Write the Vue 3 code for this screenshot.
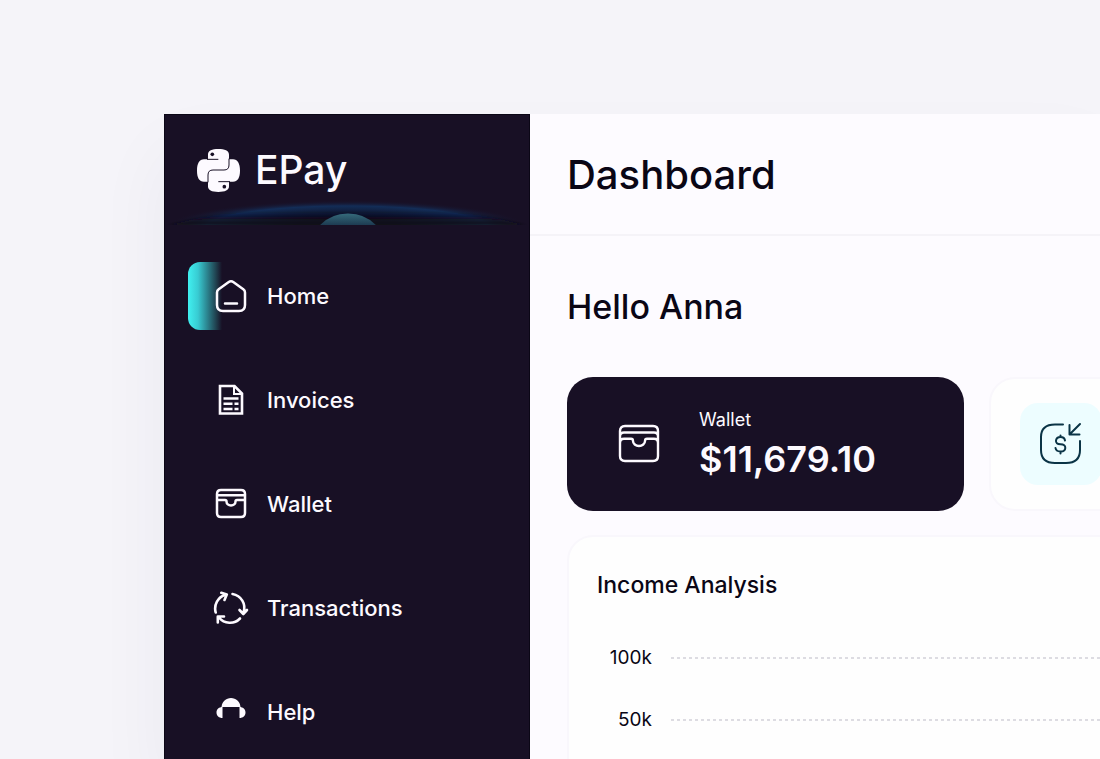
<script setup>
const items = [
  { id: 'home', label: 'Home' },
  { id: 'invoices', label: 'Invoices' },
  { id: 'wallet', label: 'Wallet' },
  { id: 'transactions', label: 'Transactions' },
  { id: 'help', label: 'Help' },
]
const ticks = ['100k', '50k']
</script>

<template>
  <div class="page">
    <div class="window">
      <aside class="sidebar">
        <div class="brand">
          <svg class="glow" viewBox="0 0 366 40" preserveAspectRatio="none" aria-hidden="true">
            <defs>
              <radialGradient id="arc" cx="0" cy="0" r="1" gradientUnits="userSpaceOnUse" gradientTransform="translate(183 42) scale(182 27)">
                <stop offset="0" stop-color="#0e0b19" />
                <stop offset="0.3" stop-color="#0e0f20" />
                <stop offset="0.55" stop-color="#101c39" />
                <stop offset="0.78" stop-color="#132d57" />
                <stop offset="1" stop-color="#181025" stop-opacity="0" />
              </radialGradient>
              <linearGradient id="shade" x1="0" y1="0" x2="0" y2="1">
                <stop offset="0" stop-color="#0e0b19" stop-opacity="0" />
                <stop offset="1" stop-color="#0e0b19" />
              </linearGradient>
              <linearGradient id="orb" x1="0" y1="0" x2="0" y2="1">
                <stop offset="0" stop-color="#356a7a" />
                <stop offset="1" stop-color="#1d3b52" />
              </linearGradient>
              <filter id="soft" x="-10%" y="-50%" width="120%" height="200%">
                <feGaussianBlur stdDeviation="4 1" />
              </filter>
            </defs>
            <ellipse cx="183" cy="42" rx="182" ry="27" fill="url(#arc)" />
            <path d="M6 40Q40 30 80 26H286Q326 30 360 40Z" fill="url(#shade)" filter="url(#soft)" />
            <path d="M156 40Q167 28.500 184 28.500T212 40Z" fill="url(#orb)" />
          </svg>
          <svg class="logo" viewBox="0 0 129 129" aria-hidden="true">
            <path fill="#fdfaff" d="M33 31V17C33 5 45 0 64 0S96 5 96 17V31H108C122 31 129 44 129 65S122 98 108 98H96V112C96 124 84 129 64 129S33 124 33 112V98H21C7 98 0 86 0 65S7 31 21 31Z" />
            <path fill="none" stroke="#181025" stroke-width="3" d="M30 31H64M96 29V48Q96 63 81 63H48Q33 63 33 78V100M64 98H99" />
            <circle cx="46" cy="16" r="5.500" fill="#181025" />
            <circle cx="82" cy="113" r="5.500" fill="#181025" />
          </svg>
          <span class="name">EPay</span>
        </div>
        <nav>
          <a v-for="(item, i) in items" :key="item.id" :href="'#' + item.id" class="item" :class="{ active: i === 0 }">
            <svg class="icon" viewBox="0 0 36 36" fill="none" stroke="#fdfaff" stroke-width="2.500" aria-hidden="true">
              <path v-if="item.id === 'home'" stroke-linecap="round" stroke-linejoin="round" d="M4 14.500Q4 12.500 5.700 11.300L15.400 4.200Q18 2.400 20.600 4.200L30.300 11.300Q32 12.500 32 14.500V27Q32 33 26 33H10Q4 33 4 27ZM12 25.500H24" />
              <g v-else-if="item.id === 'invoices'">
                <path stroke-width="2.600" d="M7 4H21.500L29 11.500V31.500H7Z" />
                <path stroke-width="2" d="M21 4.500V12H28.500" />
                <path stroke-width="2.400" d="M10.500 16.500H25.500M10.500 21.800H19.500M21.500 21.800H25.500M10.500 27H19.500M21.500 27H25.500" />
              </g>
              <path v-else-if="item.id === 'wallet'" stroke-linejoin="round" d="M4 8Q4 4 8 4H28Q32 4 32 8V27Q32 31 28 31H8Q4 31 4 27ZM4 9.200H32M4 14H12Q13.500 14 13.500 15.500A4.500 4 0 0 0 22.500 15.500Q22.500 14 24 14H32" />
              <g v-else-if="item.id === 'transactions'" stroke-width="2.600" stroke-linecap="round" stroke-linejoin="round">
                <path d="M2.700 22.500A14.500 14.500 0 0 1 12.300 4.800M8.300 2.800L13.800 4.500L11.500 10" />
                <path d="M19.500 4A14 14 0 0 1 30.500 22.500M26.500 20L30.300 24L34 20" />
                <path d="M27 28.500A14 14 0 0 1 6 27.500M4.800 32.500V26.500H11" />
              </g>
              <g v-else fill="#fdfaff" stroke="none">
                <path d="M8.500 13C9 7.500 13 4 18 4S27 7.500 27.500 13Z" />
                <path d="M9.500 13V24C6 24 3.500 21.800 3.500 18.500S6 13 9.500 13ZM26.500 13V24C30 24 32.500 21.800 32.500 18.500S30 13 26.500 13Z" />
              </g>
            </svg>
            <span>{{ item.label }}</span>
          </a>
        </nav>
      </aside>

      <main>
        <header><h1>Dashboard</h1></header>
        <div class="content">
          <h2>Hello Anna</h2>
          <div class="cards">
            <section class="card dark">
              <svg class="wallet" viewBox="0 0 42 42" fill="none" stroke="#fdfaff" stroke-width="2.400" stroke-linejoin="round" aria-hidden="true">
                <path d="M2 8Q2 3 7 3H35Q40 3 40 8V33Q40 38 35 38H7Q2 38 2 33ZM2 13.500Q2 9.500 6 9.500H36Q40 9.500 40 13.500M2 20Q2 15.800 6 15.800H13Q15 15.800 15 18A6 5 0 0 0 27 18Q27 15.800 29 15.800H36Q40 15.800 40 20" />
              </svg>
              <div>
                <div class="label">Wallet</div>
                <div class="amount">$11,679.10</div>
              </div>
            </section>
            <section class="card light">
              <div class="tile">
                <svg viewBox="0 0 44 44" fill="none" stroke="#0b3446" stroke-width="2" stroke-linecap="round" stroke-linejoin="round" aria-hidden="true">
                  <path d="M24 2.500H16Q2 2.500 2 15V28Q2 41 16 41H27Q41 41 41 28V19" />
                  <path d="M41 2L31 12M30.500 3V12.500H40.500" />
                  <path d="M26 18.500Q25.500 15 21.500 15T17 18.500T21.500 22.200T26.300 26T21.500 29.500T16.500 26M21.500 13.500V15M21.500 29.500V31.500" />
                </svg>
              </div>
            </section>
          </div>
          <section class="chart">
            <h3>Income Analysis</h3>
            <div v-for="tick in ticks" :key="tick" class="row">
              <span class="tick">{{ tick }}</span>
              <span class="line"></span>
            </div>
          </section>
        </div>
      </main>
    </div>
  </div>
</template>

<style>
body {
  background: #f5f4f9;
}
</style>

<style scoped>
* {
  box-sizing: border-box;
}
.page {
  display: flex;
  height: 100vh;
  padding: 114px 0 0 164px;
  overflow: hidden;
  background: #f5f4f9;
  color: #0a0615;
  font-family: Inter, "Liberation Sans", sans-serif;
}
.window {
  display: flex;
  flex: 1;
  min-width: 0;
  box-shadow: 0 40px 70px rgba(40, 30, 80, 0.05);
}
.sidebar {
  flex: 0 0 366px;
  background: #181025;
  color: #fdfaff;
  border: solid #0b0716;
  border-width: 1px 1px 0;
}
.brand {
  position: relative;
  display: flex;
  align-items: center;
  gap: 15px;
  height: 110px;
  padding: 0 32px;
  overflow: hidden;
}
.glow {
  position: absolute;
  left: 0;
  bottom: 0;
  width: 100%;
  height: 40px;
}
.logo {
  width: 43px;
  height: 43px;
}
.name {
  font-size: 39px;
  line-height: 48px;
  font-weight: 500;
}
nav {
  display: flex;
  flex-direction: column;
  gap: 36px;
  padding: 37px 23px 0;
}
.item {
  display: flex;
  align-items: center;
  gap: 18px;
  height: 68px;
  padding-left: 25px;
  border-radius: 12px;
  color: inherit;
  font-size: 22px;
  line-height: 32px;
  font-weight: 500;
  text-decoration: none;
}
.active {
  background: linear-gradient(90deg, #40f0f0, #38cbd2 10px, #20414f 28px, transparent 34px) no-repeat;
}
.icon {
  width: 36px;
  height: 36px;
}
main {
  flex: 1;
  min-width: 0;
  background: #fdfbff;
}
header {
  display: flex;
  align-items: center;
  height: 122px;
  padding: 2px 37px 0;
  border-bottom: 2px solid #f5f3f8;
}
h1,
h2,
h3 {
  margin: 0;
}
h1 {
  font-size: 40px;
  line-height: 48px;
  font-weight: 500;
}
.content {
  padding: 50px 0 0 37px;
  overflow: hidden;
}
h2 {
  font-size: 34px;
  line-height: 42px;
  font-weight: 500;
}
.cards {
  display: flex;
  gap: 25px;
  margin: 49px 0 24px;
}
.card {
  display: flex;
  flex: 0 0 397px;
  align-items: center;
  height: 134px;
  border-radius: 26px;
}
.dark {
  gap: 39px;
  padding-left: 51px;
  background: #181025;
  color: #fdfaff;
}
.wallet {
  width: 42px;
  height: 42px;
}
.label {
  font-size: 18px;
  line-height: 24px;
}
.amount {
  margin-top: 5px;
  font-size: 36px;
  line-height: 44px;
  font-weight: 600;
}
.light {
  padding-left: 29px;
  background: #fefefe;
  border: 2px solid #f9f7fc;
}
.tile {
  display: flex;
  align-items: center;
  justify-content: center;
  width: 82px;
  height: 82px;
  border-radius: 18px;
  background: #edfdff;
}
.tile svg {
  width: 44px;
  height: 44px;
}
.chart {
  width: 822px;
  height: 420px;
  padding: 32px 28px;
  background: #fefefe;
  border: 2px solid #f9f7fc;
  border-radius: 26px;
}
h3 {
  margin-bottom: 26px;
  font-size: 23px;
  line-height: 32px;
  font-weight: 500;
}
.row {
  display: flex;
  align-items: center;
  gap: 19px;
  height: 62px;
}
.tick {
  width: 55px;
  font-size: 19px;
  line-height: 24px;
  text-align: right;
}
.line {
  flex: 1;
  height: 2px;
  background: repeating-linear-gradient(90deg, #dddce2 0 3px, transparent 3px 6px);
}
</style>
